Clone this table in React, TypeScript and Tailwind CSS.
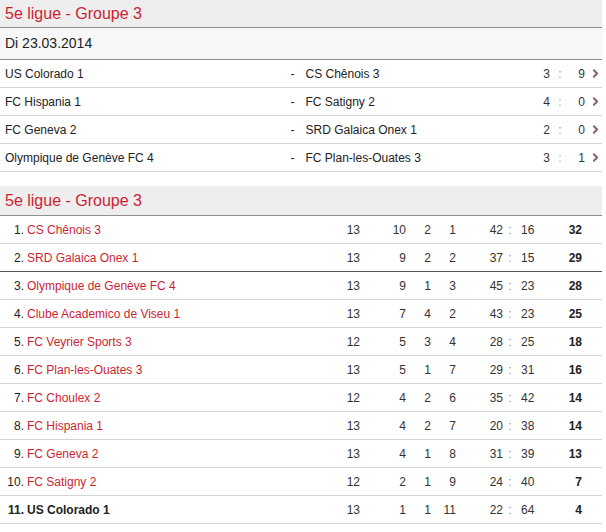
import { ChevronRight } from 'lucide-react'

const matches = [
  { home: 'US Colorado 1', away: 'CS Chênois 3', hs: 3, as: 9 },
  { home: 'FC Hispania 1', away: 'FC Satigny 2', hs: 4, as: 0 },
  { home: 'FC Geneva 2', away: 'SRD Galaica Onex 1', hs: 2, as: 0 },
  { home: 'Olympique de Genève FC 4', away: 'FC Plan-les-Ouates 3', hs: 3, as: 1 },
]

const standings = [
  { team: 'CS Chênois 3', p: 13, w: 10, d: 2, l: 1, gf: 42, ga: 16, pts: 32 },
  { team: 'SRD Galaica Onex 1', p: 13, w: 9, d: 2, l: 2, gf: 37, ga: 15, pts: 29 },
  { team: 'Olympique de Genève FC 4', p: 13, w: 9, d: 1, l: 3, gf: 45, ga: 23, pts: 28 },
  { team: 'Clube Academico de Viseu 1', p: 13, w: 7, d: 4, l: 2, gf: 43, ga: 23, pts: 25 },
  { team: 'FC Veyrier Sports 3', p: 12, w: 5, d: 3, l: 4, gf: 28, ga: 25, pts: 18 },
  { team: 'FC Plan-les-Ouates 3', p: 13, w: 5, d: 1, l: 7, gf: 29, ga: 31, pts: 16 },
  { team: 'FC Choulex 2', p: 12, w: 4, d: 2, l: 6, gf: 35, ga: 42, pts: 14 },
  { team: 'FC Hispania 1', p: 13, w: 4, d: 2, l: 7, gf: 20, ga: 38, pts: 14 },
  { team: 'FC Geneva 2', p: 13, w: 4, d: 1, l: 8, gf: 31, ga: 39, pts: 13 },
  { team: 'FC Satigny 2', p: 12, w: 2, d: 1, l: 9, gf: 24, ga: 40, pts: 7 },
  { team: 'US Colorado 1', p: 13, w: 1, d: 1, l: 11, gf: 22, ga: 64, pts: 4, own: true },
]

function SectionHeader({ className = '' }: { className?: string }) {
  return (
    <div className={`flex items-center bg-[#eeeeee] border-b border-[#8f8f8f] pl-[5px] text-[16px] text-[#cc1f33] ${className}`}>
      5e ligue - Groupe 3
    </div>
  )
}

export default function App() {
  return (
    <div className="w-[602px] bg-white font-['Liberation_Sans',Arial,sans-serif] text-[12px] text-[#222]">
      {/* Results */}
      <SectionHeader className="h-[28px]" />
      <div className="flex h-[32px] items-center bg-[#f7f7f7] border-b border-[#8f8f8f] pl-[5px] text-[14px] text-[#222]">
        Di 23.03.2014
      </div>
      {matches.map((m, i) => (
        <div key={i} className="flex h-[28px] items-center border-b border-[#d4d4d4]">
          <div className="w-[291px] pl-[5px]">{m.home}</div>
          <div className="w-[15px]">-</div>
          <div className="w-[225px]">{m.away}</div>
          <div className="w-[20px] text-right text-[#333]">{m.hs}</div>
          <div className="w-[20px] text-center text-[#999]">:</div>
          <div className="w-[15px] text-right text-[#333]">{m.as}</div>
          <div className="flex flex-1 items-center pl-[4px]">
            <ChevronRight className="h-[13px] w-[13px] text-[#8e5a6e]" strokeWidth={3.5} />
          </div>
        </div>
      ))}

      {/* Standings */}
      <SectionHeader className="mt-[14px] h-[30px]" />
      {standings.map((s, i) => (
        <div
          key={i}
          className={`flex h-[28px] items-center border-b ${i === 1 ? 'border-[#555]' : 'border-[#d4d4d4]'} ${s.own ? 'font-bold' : ''}`}
        >
          <div className="w-[24px] text-right">{i + 1}.</div>
          <div className={`w-[316px] pl-[3px] ${s.own ? 'text-[#222]' : 'text-[#cc1f33]'}`}>{s.team}</div>
          <div className="w-[20px] text-right font-normal text-[#333]">{s.p}</div>
          <div className="w-[46px] text-right font-normal text-[#333]">{s.w}</div>
          <div className="w-[25px] text-right font-normal text-[#333]">{s.d}</div>
          <div className="w-[25px] text-right font-normal text-[#333]">{s.l}</div>
          <div className="w-[47px] text-right font-normal text-[#333]">{s.gf}</div>
          <div className="w-[14px] text-center font-normal text-[#999]">:</div>
          <div className="w-[26px] pl-[4px] font-normal text-[#333]">{s.ga}</div>
          <div className="w-[39px] text-right font-bold text-[#222]">{s.pts}</div>
        </div>
      ))}
    </div>
  )
}
